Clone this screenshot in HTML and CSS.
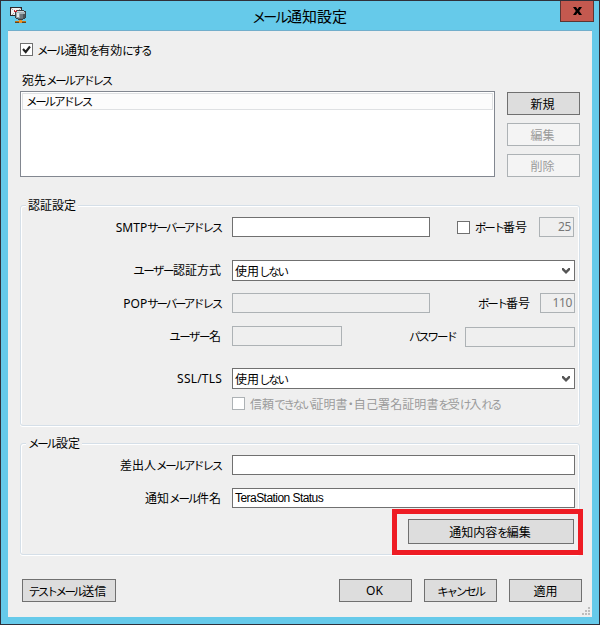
FILE: index.html
```
<!DOCTYPE html>
<html lang="ja">
<head>
<meta charset="utf-8">
<title>メール通知設定</title>
<link rel="stylesheet" href="styles.css">
</head>
<body>
<div class="window">
  <header class="titlebar">
    <svg class="app-icon" width="16" height="16" viewBox="0 0 16 16" shape-rendering="crispEdges">
      <rect x="0" y="0" width="12" height="9" fill="#2c2629"/>
      <rect x="1" y="1" width="10" height="7" fill="#f4f1f1"/>
      <path d="M1 1h1v1h1v1h-1v-1h-1zM10 1h1v1h-1v1h-1v-1h1zM2 7h1v-1h1v1h-1v1h-1z" fill="#b3a5a7"/>
      <path d="M4 3h1v1h1v-1h2v2h-1v1h-1v-1h-2z" fill="#c22a32"/>
      <path d="M7 3h7v1h2v7h-1v1h-2v1h-5v-1h-2v-1h-1v-6h2z" fill="#3a4146"/>
      <rect x="7" y="4" width="7" height="1" fill="#cfd8dc"/>
      <rect x="6" y="5" width="9" height="2" fill="#a9b4ba"/>
      <rect x="6" y="7" width="4" height="4" fill="#98a3a9"/>
      <rect x="7" y="6" width="2" height="4" fill="#e3e8ea"/>
      <rect x="10" y="7" width="3" height="4" fill="#6d787e"/>
      <rect x="13" y="7" width="2" height="4" fill="#4b555b"/>
      <rect x="8" y="11" width="5" height="1" fill="#626d73"/>
      <rect x="5" y="14" width="11" height="1" fill="#c1741a"/>
      <rect x="5" y="15" width="11" height="1" fill="#5b4526"/>
      <rect x="9" y="13" width="3" height="3" fill="#ea9226"/>
    </svg>
    <h1 class="title"><span class="kana">メール</span>通知設定</h1>
    <button class="close" aria-label="閉じる"><svg width="9" height="8" viewBox="0 0 9 8"><path d="M0 0h3l1.500 2.200L6 0h3L6.200 4 9 8H6L4.500 5.800 3 8H0l2.800-4z"/></svg></button>
  </header>
  <main class="client">
    <label class="enable"><span class="check"><svg width="11" height="11" viewBox="0 0 11 11"><path d="M2 5l2.700 3L9 2.500" fill="none" stroke="#222" stroke-width="2.100"/></svg></span><span class="enable-text"><span class="kana">メール</span>通知<span class="kana">を</span>有効<span class="kana">にする</span></span></label>
    <div class="list-title">宛先<span class="kana">メールアドレス</span></div>
    <section class="recipients">
      <div class="listbox"><div class="list-head"><span class="kana">メールアドレス</span></div></div>
      <div class="list-actions">
        <button class="btn">新規</button>
        <button class="btn off">編集</button>
        <button class="btn off">削除</button>
      </div>
    </section>

    <section class="group auth">
      <h2 class="legend">認証設定</h2>
      <div class="row smtp"><span class="label"><span class="latin">SMTP</span><span class="kana">サーバーアドレス</span></span><span class="field medium"></span><span class="check port-check"></span><span class="port-label"><span class="kana">ポート</span>番号</span><span class="field port off latin">25</span></div>
      <div class="row method"><span class="label"><span class="kana wide">ユーザー</span>認証方式</span><span class="select"><span>使用<span class="kana">しない</span></span><svg class="arrow" width="8" height="6" viewBox="0 0 8 6"><path d="M0 0h1.500L4 2.500 6.500 0H8v2L4 6 0 2z"/></svg></span></div>
      <div class="row pop"><span class="label"><span class="latin">POP</span><span class="kana">サーバーアドレス</span></span><span class="field medium off"></span><span class="port-label plain"><span class="kana">ポート</span>番号</span><span class="field port off latin">110</span></div>
      <div class="row user"><span class="label"><span class="kana wide">ユーザー</span>名</span><span class="field small off"></span><span class="password-label kana">パスワード</span><span class="field small off password"></span></div>
      <div class="row ssl"><span class="label latin last-latin">SSL/TLS</span><span class="select"><span>使用<span class="kana">しない</span></span><svg class="arrow" width="8" height="6" viewBox="0 0 8 6"><path d="M0 0h1.500L4 2.500 6.500 0H8v2L4 6 0 2z"/></svg></span></div>
      <div class="row trust"><span class="check off"></span><span class="trust-text">信頼<span class="kana">できない</span>証明書<span class="dot">・</span>自己署名証明書<span class="kana">を</span>受<span class="kana">け</span>入<span class="kana">れる</span></span></div>
    </section>

    <section class="group mail">
      <h2 class="legend"><span class="kana">メール</span>設定</h2>
      <div class="row sender"><span class="label">差出人<span class="kana">メールアドレス</span></span><span class="field full"></span></div>
      <div class="row subject"><span class="label">通知<span class="kana">メール</span>件名</span><span class="field full subject-text">TeraStation Status</span></div>
      <div class="row edit"><button class="btn edit-btn">通知内容<span class="kana">を</span>編集</button></div>
      <div class="highlight"></div>
    </section>

    <footer class="footer">
      <button class="btn test"><span class="kana tight">テストメール</span>送信</button>
      <button class="btn latin ok">OK</button>
      <button class="btn"><span class="kana">キャンセル</span></button>
      <button class="btn">適用</button>
    </footer>
    <svg class="grip" width="8" height="8" viewBox="0 0 8 8" shape-rendering="crispEdges"><path d="M6 0h2v2h-2zM3 3h2v2h-2zM6 3h2v2h-2zM0 6h2v2h-2zM3 6h2v2h-2zM6 6h2v2h-2z" fill="#bdbdbd"/></svg>
  </main>
</div>
</body>
</html>
```
FILE: styles.css
```
* { box-sizing: border-box; }
body { margin: 0; font: 12px/16px "Noto Sans CJK JP", sans-serif; color: #000; }
h1, h2 { margin: 0; font-weight: 400; }
button { font: inherit; color: inherit; padding: 0; border-radius: 0; }
.window { width: 600px; height: 625px; background: #66caea; border: 1px solid #30303a; padding: 0 7px 7px; }
.kana { font-size: 11.5px; letter-spacing: -2.2px; }
.kana.wide { letter-spacing: -1.5px; }
.kana.tight { letter-spacing: -2.6px; }
.latin { font-family: "Noto Sans", sans-serif; }
.titlebar { height: 30px; position: relative; display: flex; justify-content: center; border-bottom: 1px solid #72aecb; }
.app-icon { position: absolute; left: 2px; top: 6px; }
.title { font-size: 15px; line-height: 30px; white-space: nowrap; margin-right: 1px; }
.title .kana { font-size: 14px; letter-spacing: -2.7px; margin-right: 1px; }
.close { position: absolute; right: -2px; top: 0; width: 34px; height: 21px; background: #c4594f; border: 1px solid #5b3634; border-top: 0; display: flex; align-items: center; justify-content: center; }
.client { position: relative; height: 586px; background: #efefef; padding: 12px 12px 0; white-space: nowrap; }
.enable { display: flex; align-items: center; height: 13px; }
.enable-text { margin-left: 4px; }
.check { width: 13px; height: 13px; flex: none; display: flex; background: #fff; border: 1px solid #707070; }
.check.off { border-color: #adb2b5; }
.list-title { margin: 16px 0 3px 2px; }
.recipients { display: flex; gap: 12px; height: 86px; }
.listbox { width: 475px; background: #fff; border: 1px solid #828790; padding: 1px; }
.list-head { height: 17px; border: 1px solid #dfe1e3; background: #fcfcfc; padding-left: 3px; line-height: 14px; }
.list-actions { width: 73px; padding-top: 1px; display: flex; flex-direction: column; gap: 8px; }
.btn { flex: none; width: 73px; height: 23px; border: 1px solid #707070; background: #ddd; text-align: center; line-height: 20px; }
.list-actions .btn { padding-right: 2px; }
.btn.off { color: #9b9b9b; border-color: #adb2b5; background: #f4f4f4; }
.group { position: relative; width: 560px; border: 1px solid #d5dfe8; border-radius: 3px; box-shadow: inset 1px 1px #fff, inset -1px 0 #fff, 0 1px #fff; }
.auth { height: 221px; margin-top: 28px; padding-top: 11px; }
.mail { height: 112px; margin-top: 17px; padding-top: 11px; }
.legend { position: absolute; left: 5px; top: -9px; padding: 0 2px; background: #efefef; font-size: 12px; line-height: 16px; }
.row { display: flex; align-items: center; }
.label { width: 201px; margin-right: 10px; padding-right: 1px; text-align: right; flex: none; }
.last-latin { padding-right: 0; letter-spacing: .2px; }
.field { height: 20px; background: #fff; border: 1px solid #707070; flex: none; }
.field.off { background: #efefef; border-color: #adb2b5; color: #777; }
.medium { width: 198px; }
.small { width: 110px; }
.full, .select { width: 343px; }
.port { width: 35px; text-align: right; padding-right: 2px; line-height: 18px; letter-spacing: -.4px; }
.port-check { margin-left: 27px; }
.port-label { width: 64px; margin-left: 5px; }
.port-label.plain { margin-left: 48px; width: 62px; }
.select { height: 21px; border: 1px solid #707070; background: #fff; padding: 0 4px 0 2px; line-height: 18px; display: flex; align-items: center; }
.arrow { margin-left: auto; fill: #555; }
.smtp, .pop, .user, .sender, .subject { height: 20px; }
.method { margin-top: 23px; }
.method .label { position: relative; top: -1px; }
.pop { margin-top: 12px; }
.user { margin-top: 13px; }
.password-label { width: 56px; margin-left: 67px; }
.password { position: relative; top: 1px; }
.ssl { margin-top: 22px; }
.trust { margin: 8px 0 0 211px; height: 13px; }
.trust-text { color: #9b9b9b; margin-left: 5px; letter-spacing: .1px; }
.dot { font-feature-settings: "halt"; }
.subject { margin-top: 13px; }
.subject-text { font: 12px/18px "Liberation Sans", sans-serif; letter-spacing: -.55px; padding-left: 2px; }
.edit { margin: 11px 0 0 387px; }
.edit-btn { width: 166px; height: 25px; line-height: 22px; padding-right: 2px; }
.highlight { position: absolute; left: 371px; top: 65px; width: 191px; height: 46px; border: 5px solid #ee1c24; }
.footer { display: flex; gap: 12px; margin: 24px 0 0 2px; }
.test { width: 94px; margin-right: 211px; padding-right: 3px; }
.ok { padding-right: 2px; }
.grip { position: absolute; right: 2px; bottom: 2px; }
```
